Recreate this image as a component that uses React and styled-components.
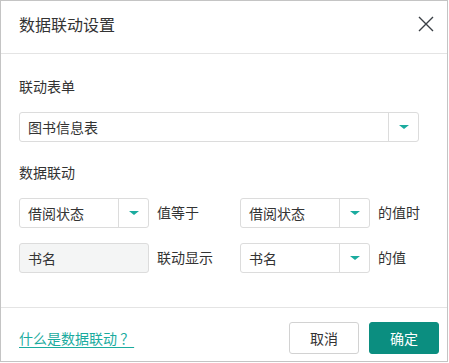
import React from 'react'
import styled, { createGlobalStyle } from 'styled-components'

const GlobalStyle = createGlobalStyle`
  body {
    margin: 0;
    background: #ffffff;
    font-family: "Noto Sans CJK SC", "Noto Sans", sans-serif;
    color: #333333;
  }
`

const Dialog = styled.div`
  width: 448px;
  height: 362px;
  box-sizing: border-box;
  border: 1px solid #c4c4c4;
  background: #ffffff;
  display: flex;
  flex-direction: column;
`

const Header = styled.div`
  height: 52px;
  flex: none;
  display: flex;
  align-items: center;
  justify-content: space-between;
  padding: 0 9px 0 18px;
  border-bottom: 1px solid #e4e4e4;
`

const Title = styled.div`
  font-size: 16px;
  color: #333333;
  line-height: 20px;
  margin-top: -6px;
`

const CloseButton = styled.button`
  width: 24px;
  height: 24px;
  margin-top: -6px;
  padding: 0;
  border: none;
  background: none;
  display: flex;
  align-items: center;
  justify-content: center;
  cursor: pointer;
`

const Body = styled.div`
  flex: 1;
  padding: 22px 18px 0;
`

const Label = styled.div`
  font-size: 14px;
  line-height: 20px;
  color: #333333;
  margin-top: ${(p) => p.$top || 0}px;
`

const SelectBox = styled.div`
  width: ${(p) => p.$width}px;
  height: 30px;
  box-sizing: border-box;
  border: 1px solid #dcdcdc;
  border-radius: 3px;
  display: flex;
  align-items: stretch;
  background: ${(p) => (p.$disabled ? '#f4f5f5' : '#ffffff')};
  margin-top: ${(p) => p.$top || 0}px;
`

const SelectValue = styled.div`
  flex: 1;
  display: flex;
  align-items: center;
  padding-left: 8px;
  font-size: 14px;
  color: #333333;
`

const ArrowCell = styled.div`
  width: 29px;
  border-left: 1px solid #dcdcdc;
  display: flex;
  align-items: center;
  justify-content: center;
`

const Arrow = styled.span`
  width: 0;
  height: 0;
  border-left: 5px solid transparent;
  border-right: 5px solid transparent;
  border-top: 4px solid #1aab9e;
`

const LinkRows = styled.div`
  display: grid;
  grid-template-columns: 130px 75px 130px auto;
  column-gap: 8px;
  row-gap: 15px;
  margin-top: 16px;
  align-items: center;
`

const RowText = styled.span`
  font-size: 14px;
  color: #333333;
  margin-top: -2px;
`

const Footer = styled.div`
  flex: none;
  border-top: 1px solid #e4e4e4;
  padding: 14px 8px 7px 18px;
  display: flex;
  align-items: center;
`

const HelpLink = styled.a`
  font-size: 14px;
  color: #1aab9e;
  text-decoration: underline;
  text-underline-offset: 3px;
  margin-right: auto;
  cursor: pointer;
`

const Button = styled.button`
  width: 70px;
  height: 32px;
  box-sizing: border-box;
  border-radius: 3px;
  font-family: inherit;
  font-size: 14px;
  margin-left: 10px;
  cursor: pointer;
  border: 1px solid ${(p) => (p.$primary ? '#0b8e80' : '#d2d2d2')};
  background: ${(p) => (p.$primary ? '#0b8e80' : '#ffffff')};
  color: ${(p) => (p.$primary ? '#ffffff' : '#333333')};
`

const Select = ({ value, width, top, disabled }) => (
  <SelectBox $width={width} $top={top} $disabled={disabled}>
    <SelectValue>{value}</SelectValue>
    {!disabled && (
      <ArrowCell>
        <Arrow />
      </ArrowCell>
    )}
  </SelectBox>
)

const App = () => {
  return (
    <>
      <GlobalStyle />
      <Dialog>
        <Header>
          <Title>数据联动设置</Title>
          <CloseButton>
            <svg width="16" height="16" viewBox="0 0 16 16">
              <path d="M1 1L15 15M15 1L1 15" stroke="#3a3f45" strokeWidth="1.4" fill="none" />
            </svg>
          </CloseButton>
        </Header>

        <Body>
          <Label>联动表单</Label>
          <Select value="图书信息表" width={400} top={16} />

          <Label $top={20}>数据联动</Label>
          <LinkRows>
            <Select value="借阅状态" width={130} />
            <RowText>值等于</RowText>
            <Select value="借阅状态" width={130} />
            <RowText>的值时</RowText>

            <Select value="书名" width={130} disabled />
            <RowText>联动显示</RowText>
            <Select value="书名" width={130} />
            <RowText>的值</RowText>
          </LinkRows>
        </Body>

        <Footer>
          <HelpLink>什么是数据联动 ？</HelpLink>
          <Button>取消</Button>
          <Button $primary>确定</Button>
        </Footer>
      </Dialog>
    </>
  )
}

export default App
